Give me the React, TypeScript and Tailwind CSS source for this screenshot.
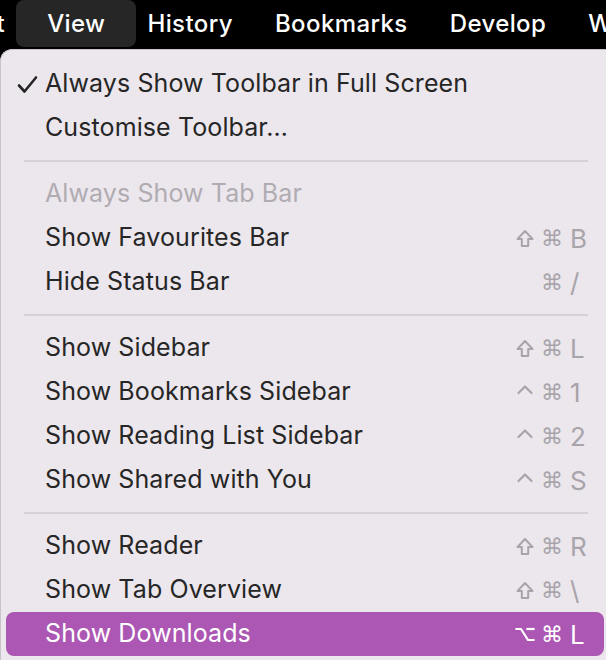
import React from 'react';

type Mod = 'shift' | 'ctrl' | 'opt' | null;

type Item =
  | { kind: 'sep' }
  | { kind: 'item'; label: string; checked?: boolean; disabled?: boolean; active?: boolean; mod?: Mod; cmd?: boolean; key?: string };

const items: Item[] = [
  { kind: 'item', label: 'Always Show Toolbar in Full Screen', checked: true },
  { kind: 'item', label: 'Customise Toolbar…' },
  { kind: 'sep' },
  { kind: 'item', label: 'Always Show Tab Bar', disabled: true },
  { kind: 'item', label: 'Show Favourites Bar', mod: 'shift', cmd: true, key: 'B' },
  { kind: 'item', label: 'Hide Status Bar', cmd: true, key: '/' },
  { kind: 'sep' },
  { kind: 'item', label: 'Show Sidebar', mod: 'shift', cmd: true, key: 'L' },
  { kind: 'item', label: 'Show Bookmarks Sidebar', mod: 'ctrl', cmd: true, key: '1' },
  { kind: 'item', label: 'Show Reading List Sidebar', mod: 'ctrl', cmd: true, key: '2' },
  { kind: 'item', label: 'Show Shared with You', mod: 'ctrl', cmd: true, key: 'S' },
  { kind: 'sep' },
  { kind: 'item', label: 'Show Reader', mod: 'shift', cmd: true, key: 'R' },
  { kind: 'item', label: 'Show Tab Overview', mod: 'shift', cmd: true, key: '\\' },
  { kind: 'item', label: 'Show Downloads', active: true, mod: 'opt', cmd: true, key: 'L' },
];

function ModIcon({ mod }: { mod: Mod }) {
  if (mod === 'shift') {
    return (
      <svg width="18" height="19" viewBox="0 0 18 19" fill="none" stroke="currentColor" strokeWidth="2" strokeLinejoin="round">
        <path d="M9 2 L16.5 10 H12.2 V17 H5.8 V10 H1.5 Z" />
      </svg>
    );
  }
  if (mod === 'ctrl') {
    return (
      <svg width="18" height="18" viewBox="0 0 18 18" fill="none" stroke="currentColor" strokeWidth="2.2" strokeLinecap="round" strokeLinejoin="round">
        <path d="M2.5 10 L9 3.5 L15.5 10" />
      </svg>
    );
  }
  if (mod === 'opt') {
    return (
      <svg width="20" height="18" viewBox="0 0 20 18" fill="none" stroke="currentColor" strokeWidth="2.2" strokeLinecap="square">
        <path d="M1.5 4 H6 L13 15 H18.5" />
        <path d="M12.5 4 H18.5" />
      </svg>
    );
  }
  return null;
}

function Shortcut({ item }: { item: Extract<Item, { kind: 'item' }> }) {
  if (!item.key) return null;
  return (
    <div className="flex items-center">
      <span className="w-[26px] flex justify-center">
        <ModIcon mod={item.mod ?? null} />
      </span>
      <span className="w-[28px] text-center text-[22px] font-['DejaVu_Sans',sans-serif]">⌘</span>
      <span className="w-[22px] pl-[4px] text-left text-[26px]">{item.key}</span>
    </div>
  );
}

export default function App() {
  return (
    <div className="w-[606px] h-[660px] overflow-hidden bg-black font-['Inter','Noto_Sans',sans-serif]">
      <div className="h-[48px] flex items-stretch text-white text-[24px] font-medium tracking-[0.4px] whitespace-nowrap">
        <div className="flex items-center -ml-[40px] pr-[21px]">Edit</div>
        <div className="flex items-center px-[31px] -mx-[10px] bg-[#262626] rounded-[8px] mb-[1px]">View</div>
        <div className="flex items-center px-[21px]">History</div>
        <div className="flex items-center px-[21px]">Bookmarks</div>
        <div className="flex items-center px-[21px]">Develop</div>
        <div className="flex items-center px-[21px]">Window</div>
      </div>

      <div className="w-[612px] h-[620px] mt-[1px] pt-[12px] bg-[#ece7ed] rounded-tl-[12px] border-t border-l border-[#c9c4ca] text-[25px] tracking-[0.1px]">
        {items.map((item, i) =>
          item.kind === 'sep' ? (
            <div key={i} className="h-[22px] flex items-center ml-[23px] mr-[24px]">
              <div className="h-[2px] w-full bg-[#d6d1d7]" />
            </div>
          ) : (
            <div
              key={i}
              className={
                'h-[44px] mx-[5px] mr-[8px] rounded-[8px] flex items-center pr-[16px] ' +
                (item.active ? 'bg-[#ab57b3] text-white' : item.disabled ? 'text-[#b0acb2]' : 'text-[#262626]')
              }
            >
              <span className="w-[39px] pl-[11px] flex items-center">
                {item.checked && (
                  <svg width="21" height="19" viewBox="0 0 21 19" fill="none" stroke="#262626" strokeWidth="2.6" strokeLinecap="round" strokeLinejoin="round">
                    <path d="M2 10.5 L7.5 16.5 L19 2.5" />
                  </svg>
                )}
              </span>
              <span className="flex-1 whitespace-nowrap">{item.label}</span>
              <span className={item.active ? 'text-white' : 'text-[#a8a4aa]'}>
                <Shortcut item={item} />
              </span>
            </div>
          )
        )}
      </div>
    </div>
  );
}
